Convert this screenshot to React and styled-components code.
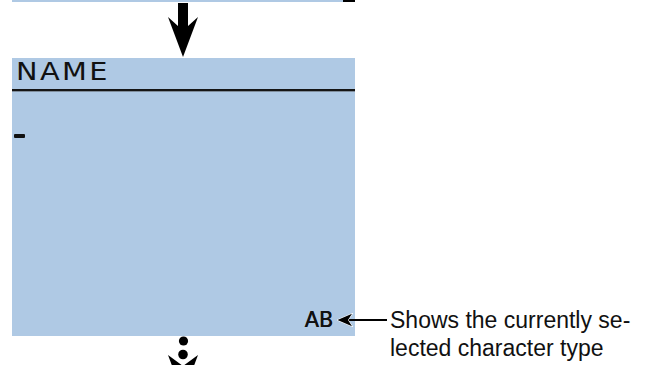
import React from 'react'
import styled, {createGlobalStyle} from 'styled-components'

const Global = createGlobalStyle`
  html, body {
    margin: 0;
    padding: 0;
    background: #ffffff;
    overflow: hidden;
  }
`

const Page = styled.div`
  width: 653px;
  height: 365px;
  display: flex;
  flex-direction: column;
  overflow: hidden;

  & > * {
    flex-shrink: 0;
  }
`

// edge of the previous screen, cut off by the top of the picture
const PrevScreen = styled.div`
  margin-left: 12px;
  width: 343px;
  height: 2px;
  display: flex;
`
const PrevBlue = styled.div`
  flex: 1;
  background: #afc9e4;
`
const PrevDark = styled.div`
  width: 12px;
  background: #000;
`

const ArrowSlot = styled.div`
  margin-left: 163px;
  width: 40px;
  height: 56px;
  display: flex;
`

const Row = styled.div`
  margin-left: 12px;
  display: flex;
  align-items: flex-end;
`

const Screen = styled.div`
  width: 343px;
  height: 278px;
  flex-shrink: 0;
  background: #afc9e4;
  display: flex;
  flex-direction: column;
  font-family: "DejaVu Sans", sans-serif;
  color: #111;
`

const Header = styled.div`
  height: 29px;
  flex-shrink: 0;
  padding: 2px 0 0 4px;
  border-bottom: 2px solid #151515;
  box-shadow: 0 1px 0 #7f8d9c;
`

const Title = styled.span`
  display: inline-block;
  font-size: 24px;
  line-height: 24px;
  letter-spacing: 2px;
  transform: scaleX(1.2);
  transform-origin: left center;
`

const Cursor = styled.div`
  flex-shrink: 0;
  margin: 43px 0 0 2px;
  width: 11px;
  height: 4px;
  background: #111;
  border-radius: 1px;
`

const Spacer = styled.div`
  flex: 1;
`

const Footer = styled.div`
  display: flex;
  justify-content: flex-end;
  padding: 0 22px 5px 0;
`

const Mode = styled.span`
  display: inline-block;
  font-size: 22px;
  line-height: 22px;
  transform: scaleX(0.95);
  transform-origin: right center;
  text-shadow: 0.4px 0 0 #111;
`

const Callout = styled.div`
  display: flex;
  align-items: flex-start;
  gap: 3px;
  margin-left: -18px;
  margin-bottom: -26px;
  position: relative;
`

const Pointer = styled.svg`
  margin-top: 7px;
  flex-shrink: 0;
`

const Note = styled.div`
  font-family: "Liberation Sans", Arial, sans-serif;
  font-size: 23px;
  line-height: 28px;
  color: #111;
  white-space: nowrap;
`

const Continue = styled.div`
  margin-left: 163px;
  width: 40px;
  height: 60px;
  display: flex;
`

export default function App() {
  return (
    <Page>
      <Global/>
      <PrevScreen>
        <PrevBlue/>
        <PrevDark/>
      </PrevScreen>
      <ArrowSlot>
        <svg width="40" height="56" viewBox="0 0 40 56">
          <path d="M15 1 H25 V24 L35 15 L20 55 L5 15 L15 24 Z" fill="#000"/>
        </svg>
      </ArrowSlot>
      <Row>
        <Screen>
          <Header>
            <Title>NAME</Title>
          </Header>
          <Cursor/>
          <Spacer/>
          <Footer>
            <Mode>AB</Mode>
          </Footer>
        </Screen>
        <Callout>
          <Pointer width="50" height="14" viewBox="0 0 50 14">
            <rect x="10" y="6" width="40" height="2" fill="#000"/>
            <path d="M0.5 7 L15 0.8 L11 7 L15 13.2 Z" fill="#000" stroke="#fff" strokeWidth="1.2" paintOrder="stroke"/>
          </Pointer>
          <Note>
            Shows the currently se-<br/>
            lected character type
          </Note>
        </Callout>
      </Row>
      <Continue>
        <svg width="40" height="60" viewBox="0 0 40 60">
          <path d="M5 19 L20 30 L35 19 L20 59 Z" fill="#000"/>
          <circle cx="20.5" cy="5" r="4.6" fill="#000"/>
          <circle cx="20" cy="18.5" r="4.8" fill="#000" stroke="#fff" strokeWidth="1.5" paintOrder="stroke"/>
        </svg>
      </Continue>
    </Page>
  )
}
